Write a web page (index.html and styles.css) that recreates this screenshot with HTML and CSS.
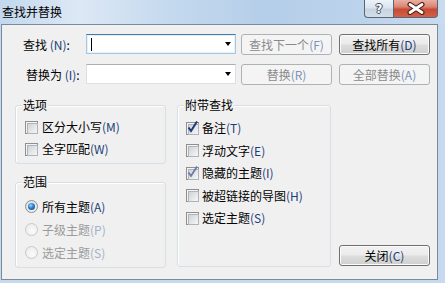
FILE: index.html
```html
<!DOCTYPE html>
<html lang="zh-CN">
<head>
    <meta charset="UTF-8">
    <title>查找并替换</title>
    <link rel="stylesheet" href="styles.css">
</head>
<body>
    <div class="window">
        <div class="titlebar">
            <span class="title">查找并替换</span>
            <div class="caption-btns">
                <div class="cap-btn help">?</div>
                <div class="cap-btn close">
                    <svg width="20" height="13" viewBox="0 0 20 13">
                        <path d="M4 2.5 L16 10.5 M16 2.5 L4 10.5" stroke="#4a1d16" stroke-width="5" stroke-linecap="round"/>
                        <path d="M4 2.5 L16 10.5 M16 2.5 L4 10.5" stroke="#fff" stroke-width="2.8" stroke-linecap="round"/>
                    </svg>
                </div>
            </div>
        </div>

        <div class="panel">
            <div class="fields">
                <label class="lbl lbl-find">查找 <span class="key">(N)</span>:</label>
                <div class="combo focus"><span class="caret"></span><span class="arrow"></span></div>
                <button class="btn" disabled>查找下一个<span class="key">(F)</span></button>
                <button class="btn">查找所有<span class="key">(D)</span></button>

                <label class="lbl lbl-repl">替换为 <span class="key">(I)</span>:</label>
                <div class="combo"><span class="arrow"></span></div>
                <button class="btn" disabled>替换<span class="key">(R)</span></button>
                <button class="btn" disabled>全部替换<span class="key">(A)</span></button>
            </div>

            <div class="lower">
                <div class="col-left">
                    <div class="group g-options">
                        <div class="gtitle">选项</div>
                        <div class="rows">
                            <div class="opt"><span class="cb"></span>区分大小写<span class="key">(M)</span></div>
                            <div class="opt"><span class="cb"></span>全字匹配<span class="key">(W)</span></div>
                        </div>
                    </div>
                    <div class="group g-scope">
                        <div class="gtitle">范围</div>
                        <div class="rows">
                            <div class="opt radio-row"><span class="rb on"></span>所有主题<span class="key">(A)</span></div>
                            <div class="opt radio-row off"><span class="rb"></span>子级主题<span class="key">(P)</span></div>
                            <div class="opt radio-row off"><span class="rb"></span>选定主题<span class="key">(S)</span></div>
                        </div>
                    </div>
                </div>

                <div class="group g-extra">
                    <div class="gtitle">附带查找</div>
                    <div class="rows">
                        <div class="opt"><span class="cb checked">
                            <svg width="12" height="13" viewBox="0 0 12 13"><path d="M1.5 6.5 L4 10 L10 0.5" fill="none" stroke="#1e3a78" stroke-width="2"/></svg>
                        </span>备注<span class="key">(T)</span></div>
                        <div class="opt"><span class="cb"></span>浮动文字<span class="key">(E)</span></div>
                        <div class="opt"><span class="cb checked">
                            <svg width="12" height="13" viewBox="0 0 12 13"><path d="M1.5 6.5 L4 10 L10 0.5" fill="none" stroke="#6a7ba6" stroke-width="1.8"/></svg>
                        </span>隐藏的主题<span class="key">(I)</span></div>
                        <div class="opt"><span class="cb"></span>被超链接的导图<span class="key">(H)</span></div>
                        <div class="opt"><span class="cb"></span>选定主题<span class="key">(S)</span></div>
                    </div>
                </div>

                <div class="col-right">
                    <button class="btn">关闭<span class="key">(C)</span></button>
                </div>
            </div>
        </div>
    </div>
</body>
</html>
```

FILE: styles.css
```css
* {
    margin: 0;
    padding: 0;
    box-sizing: border-box;
}

body {
    font-family: "Noto Sans CJK SC", "Liberation Sans", sans-serif;
    font-size: 12px;
    line-height: 16px;
    color: #000;
    background: #c6d9ee;
}

.window {
    width: 445px;
    height: 283px;
    background: #c6d9ee;
}

/* title bar */
.titlebar {
    height: 24px;
    display: flex;
    justify-content: space-between;
    align-items: flex-start;
    background: linear-gradient(90deg, #c3d8ee 0%, #dce8f5 18%, #c4d9ee 38%, #b5cee9 60%, #bcd3ec 82%, #c9dbee 100%);
}

.title {
    padding: 4px 0 0 2px;
    font-size: 12px;
}

.caption-btns {
    display: flex;
    margin-right: 7px;
}

.cap-btn {
    height: 18px;
    border: 1px solid #5a6676;
    border-top: none;
    display: flex;
    align-items: center;
    justify-content: center;
}

.help {
    width: 29px;
    border-right: none;
    border-bottom-left-radius: 4px;
    background: linear-gradient(#eef2f8 0%, #dbe4ef 45%, #c8d4e3 55%, #d3deea 100%);
    color: #fff;
    font-family: "DejaVu Sans", sans-serif;
    font-weight: bold;
    font-size: 12px;
    text-shadow: 1px 0 0 #3e4a5a, -1px 0 0 #3e4a5a, 0 1px 0 #3e4a5a, 0 -1px 0 #3e4a5a;
}

.close {
    width: 45px;
    border-bottom-right-radius: 4px;
    background: linear-gradient(#e9b0a3 0%, #da8574 40%, #c94a33 55%, #d0614b 100%);
}

/* main panel */
.panel {
    width: 437px;
    height: 256px;
    margin-left: 1px;
    border: 1px solid #7b8a9b;
    background: #f0f0f0;
}

.fields {
    display: grid;
    grid-template-columns: 84px 150px 96px 98px;
    grid-template-rows: 21px 21px;
    row-gap: 9px;
    padding-top: 9px;
}

.lbl {
    align-self: center;
}

.lbl-find {
    padding-left: 21px;
}

.lbl-repl {
    padding-left: 24px;
}

.key {
    color: #1d3d78;
}

.combo {
    height: 20px;
    display: flex;
    align-items: center;
    justify-content: space-between;
    padding: 0 4px 0 4px;
    background: #fff;
    border: 1px solid #dbdfe6;
    border-top-color: #abadb3;
}

.combo.focus {
    border-color: #a4c9e3;
    border-top-color: #3d7bad;
    box-shadow: inset 0 0 0 1px #e6f0f8;
}

.caret {
    width: 1px;
    height: 13px;
    background: #000;
}

.arrow {
    margin-left: auto;
    width: 0;
    height: 0;
    border-left: 3.5px solid transparent;
    border-right: 3.5px solid transparent;
    border-top: 4px solid #000;
}

.btn {
    justify-self: end;
    width: 91px;
    height: 21px;
    font: inherit;
    color: #000;
    border: 1px solid #707070;
    border-radius: 3px;
    background: linear-gradient(#f2f2f2 0%, #ebebeb 48%, #dddddd 52%, #cfcfcf 100%);
    box-shadow: inset 0 0 0 1px #fbfbfb;
}

.btn:disabled {
    color: #8a8a8a;
    border-color: #adb2b5;
    background: #f4f4f4;
    box-shadow: none;
}

.btn:disabled .key {
    color: #7d93b6;
}

/* lower area */
.lower {
    display: flex;
    align-items: flex-start;
    height: 171px;
    margin-top: 12px;
    padding-left: 13px;
}

.col-left {
    width: 151px;
}

.group {
    margin-top: 8px;
    border: 1px solid #d5dfe5;
    border-radius: 3px;
    box-shadow: inset 1px 1px 0 #fff;
}

.g-options {
    height: 59px;
}

.g-scope {
    height: 86px;
    margin-top: 18px;
}

.g-extra {
    width: 154px;
    height: 162px;
    margin-left: 11px;
}

.gtitle {
    width: fit-content;
    margin: -9px 0 0 6px;
    padding: 0 1px;
    background: #f0f0f0;
}

.rows {
    margin-top: 3px;
}

.g-scope .rows {
    margin-top: 5px;
}

.g-extra .rows {
    margin-top: 4px;
}

.opt {
    display: flex;
    align-items: center;
    height: 22px;
    padding-left: 9px;
}

.radio-row {
    height: 23px;
}

.g-extra .opt {
    height: 22.5px;
    padding-left: 8px;
}

.off {
    color: #9b9b9b;
}

.off .key {
    color: #a3b1c8;
}

/* checkbox */
.cb {
    position: relative;
    width: 13px;
    height: 13px;
    margin-right: 4px;
    border: 1px solid #8e8f8f;
    background: #f4f4f4;
}

.cb::before {
    content: "";
    position: absolute;
    left: 1px;
    top: 1px;
    width: 9px;
    height: 9px;
    border: 1px solid #b0b4b9;
    background: linear-gradient(135deg, #cfd3d8, #f6f6f6);
}

.cb svg {
    position: absolute;
    left: 0;
    top: -2px;
    z-index: 1;
}

.g-extra .cb {
    margin-right: 3px;
}

/* radio */
.rb {
    position: relative;
    width: 13px;
    height: 13px;
    margin-right: 4px;
    border: 1px solid #8e8f8f;
    border-radius: 50%;
    background: radial-gradient(circle at 60% 65%, #f8f8f8, #d6d8db);
}

.rb.on::before {
    content: "";
    position: absolute;
    left: 2px;
    top: 2px;
    width: 7px;
    height: 7px;
    border-radius: 50%;
    background: radial-gradient(circle at 40% 35%, #9ad7ff 0%, #2a7ccc 45%, #0d3f80 100%);
}

.off .rb {
    border-color: #c9c9c9;
    background: radial-gradient(circle at 60% 65%, #fbfbfb, #e8e8e8);
}

.col-right {
    width: 91px;
    height: 171px;
    margin-left: 8px;
    padding-bottom: 2px;
    display: flex;
    flex-direction: column;
    justify-content: flex-end;
}
```
